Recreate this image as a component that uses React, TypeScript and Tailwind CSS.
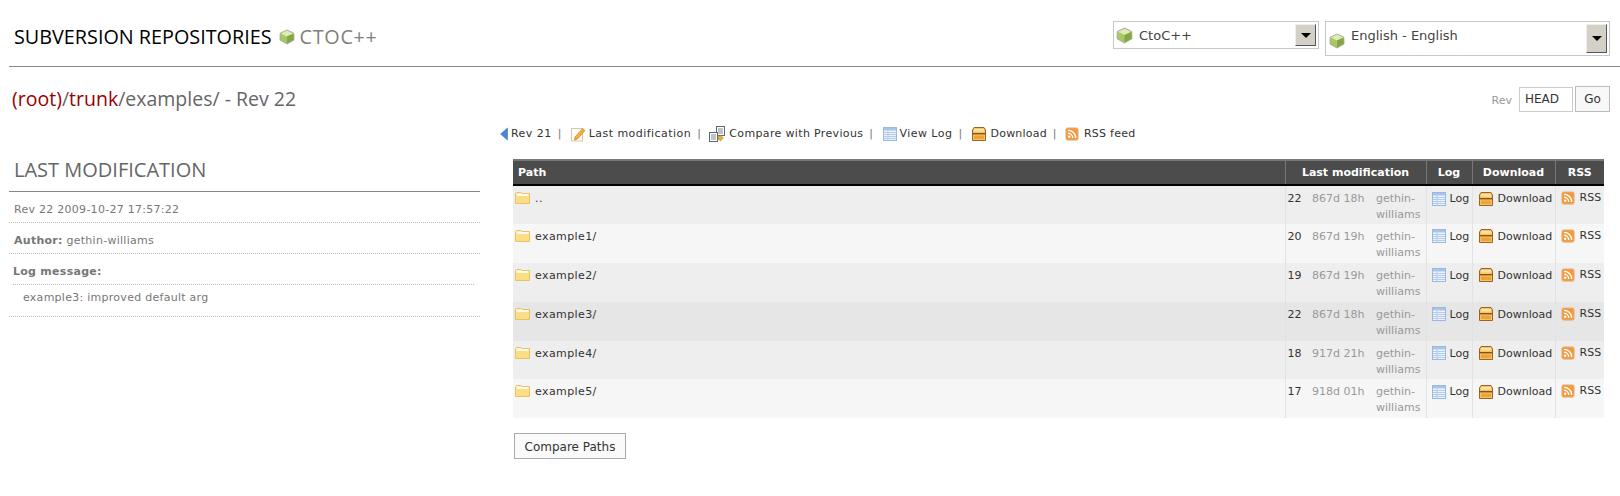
import type { ReactNode } from "react";

function Cube({ className = "" }: { className?: string }) {
  return (
    <svg viewBox="0 0 16 16" className={`shrink-0 ${className}`}>
      <path d="M8 1 14.8 4.2 15 11 8 15 1 11 1.2 4.2Z" fill="#a8c864" stroke="#a3a89a" strokeWidth="0.9" strokeLinejoin="round" />
      <path d="M8 1.6 14.2 4.5 8 7.6 1.8 4.5Z" fill="#dcebb8" />
      <path d="M8 7.6 14.5 4.7 14.6 10.8 8 14.5Z" fill="#86a544" />
    </svg>
  );
}

function FolderIcon() {
  return (
    <svg viewBox="0 0 16 14" className="h-[14px] w-4 shrink-0">
      <path d="M.5 2.5 1.5 1.5H6L7 2.5H14.5V12.5H.5Z" fill="#fbeebc" stroke="#e6c266" />
      <rect x="1.2" y="5" width="12.8" height="7" fill="#fbdd84" />
      <rect x="2.5" y="3.2" width="10.5" height="1.4" fill="#fff" />
    </svg>
  );
}

function LogIcon() {
  return (
    <svg viewBox="0 0 16 16" className="h-4 w-4 shrink-0">
      <rect x="1.5" y="1.5" width="13" height="13" fill="#eef4fc" stroke="#9ab8e0" />
      <rect x="2" y="2" width="12" height="2.5" fill="#a9c4ea" />
      <path d="M2 6.5H14M2 8.5H14M2 10.5H14M2 12.5H14M6 4.5V14" stroke="#b4cbec" strokeWidth="1" />
    </svg>
  );
}

function DownloadIcon() {
  return (
    <svg viewBox="0 0 16 16" className="h-4 w-4 shrink-0">
      <path d="M3 1.5H13L14.5 4V14.5H1.5V4Z" fill="#f6c468" stroke="#a0621c" strokeLinejoin="round" />
      <rect x="3" y="3" width="10" height="2.5" fill="#fbe2a6" />
      <rect x="1.5" y="7" width="13" height="1.4" fill="#8a5214" />
      <rect x="3" y="9.5" width="10" height="3.5" fill="#eda437" />
    </svg>
  );
}

function RssIcon() {
  return (
    <svg viewBox="0 0 16 16" className="h-[14px] w-[14px] shrink-0">
      <rect x="1" y="1" width="14" height="14" rx="2" fill="#f29a3c" stroke="#e6b488" />
      <circle cx="4.8" cy="11.2" r="1.4" fill="#fff" />
      <path d="M3.5 7.2a5.3 5.3 0 0 1 5.3 5.3M3.5 3.8a8.7 8.7 0 0 1 8.7 8.7" fill="none" stroke="#fff" strokeWidth="1.6" />
    </svg>
  );
}

function EditIcon() {
  return (
    <svg viewBox="0 0 16 16" className="h-4 w-4 shrink-0">
      <rect x="1.5" y="2.5" width="11" height="12.5" fill="#fdfdf8" stroke="#d4c8b0" />
      <path d="M5 11 12.5 2.5 15 4.5 7.5 13 4.5 14Z" fill="#f2b13a" stroke="#c4842a" strokeWidth="0.7" />
    </svg>
  );
}

function CompareIcon() {
  return (
    <svg viewBox="0 0 16 16" className="h-4 w-4 shrink-0">
      <rect x="7.5" y="0.5" width="8" height="9" fill="#fff" stroke="#5c6a78" />
      <path d="M9 3H14M9 5H14M9 7H14" stroke="#5c6a78" strokeWidth="0.8" />
      <rect x="0.5" y="6.5" width="8" height="9" fill="#fff" stroke="#5c6a78" />
      <path d="M2 9H7M2 11H7M2 13H7" stroke="#5c6a78" strokeWidth="0.8" />
      <path d="M9 10.5 11 10.5 11 9 14.5 12 11 15 11 13.5 9 13.5Z" fill="#e8b030" stroke="#a87c18" strokeWidth="0.5" />
    </svg>
  );
}

function ArrowIcon() {
  return (
    <svg viewBox="0 0 8 14" className="h-[14px] w-2 shrink-0">
      <path d="M7.5 1V13L.5 7Z" fill="#4a86d8" stroke="#2f62b0" strokeWidth="0.5" />
    </svg>
  );
}

function FakeSelect({ label, className, boxClass, arrowClass, iconClass }: { label: string; className: string; boxClass: string; arrowClass: string; iconClass: string }) {
  return (
    <div className={`flex border border-[#c8c8c8] bg-white ${className}`}>
      <div className={`flex flex-1 items-start ${boxClass}`}>
        <Cube className={iconClass} />
        <span className="ml-[6px] mt-px text-[13px] leading-[16px] text-[#444]">{label}</span>
      </div>
      <div className={`flex items-center justify-center border border-b-[#555] border-l-[#eee] border-r-[#555] border-t-[#eee] bg-[#d4d0c8] ${arrowClass}`}>
        <div className="h-0 w-0 border-x-[5px] border-t-[5px] border-x-transparent border-t-black" />
      </div>
    </div>
  );
}

function NavItem({ icon, children, sep = true }: { icon: ReactNode; children: ReactNode; sep?: boolean }) {
  return (
    <span className="flex items-center">
      {icon}
      <span>{children}</span>
      {sep && <span className="ml-[6px] mr-[8px] text-[#777]">|</span>}
    </span>
  );
}

const rows = [
  { name: "..", rev: 22, age: "867d 18h", bg: "bg-[#eeeeee]" },
  { name: "example1/", rev: 20, age: "867d 19h", bg: "bg-[#f6f6f6]" },
  { name: "example2/", rev: 19, age: "867d 19h", bg: "bg-[#eeeeee]" },
  { name: "example3/", rev: 22, age: "867d 18h", bg: "bg-[#e6e6e6]" },
  { name: "example4/", rev: 18, age: "917d 21h", bg: "bg-[#eeeeee]" },
  { name: "example5/", rev: 17, age: "918d 01h", bg: "bg-[#f6f6f6]" },
];

export default function App() {
  return (
    <div className="h-[496px] bg-white text-[12px] text-[#333] [font-family:'DejaVu_Sans',sans-serif]">
      {/* header */}
      <div className="ml-[9px] flex h-[67px] border-b border-[#888] pr-[10px]">
        <div className="flex flex-1 items-start pl-[5px] pt-[25px] text-[19.8px] leading-[24px] [font-family:'Open_Sans',sans-serif]">
          <span className="text-black">SUBVERSION REPOSITORIES</span>
          <Cube className="ml-[7px] mt-[4px] h-4 w-4" />
          <span className="ml-[5px] tracking-[0.7px] text-[#808080]">CTOC++</span>
        </div>
        <div className="flex items-start gap-[6px] pt-[21px]">
          <FakeSelect label="CtoC++" className="h-[28px] w-[206px]" boxClass="pl-[2px] pt-[5px]" arrowClass="mr-[2px] mt-[2px] h-[22px] w-[21px]" iconClass="h-[17px] w-[17px]" />
          <FakeSelect label="English - English" className="h-[35px] w-[285px]" boxClass="pl-[3px] pt-[5px]" arrowClass="mr-[2px] mt-[2px] h-[29px] w-[21px]" iconClass="mt-[6px] h-4 w-4" />
        </div>
      </div>

      <div className="flex">
        {/* left column */}
        <div className="ml-[9px] w-[471px] shrink-0">
          <div className="pl-[3px] pt-[19px] text-[19.5px] leading-[26px] text-[#666] [font-family:'Open_Sans',sans-serif]">
            <span className="text-[#990000]">(root)</span>/<span className="text-[#990000]">trunk</span>/examples/ - Rev 22
          </div>
          <div className="mt-[44px] h-[36px] border-b border-[#888] pl-[5px] text-[20px] leading-[28px] text-[#666] [font-family:'Open_Sans',sans-serif]">
            LAST MODIFICATION
          </div>
          <div className="text-[11px] leading-[16px] tracking-[0.27px] text-[#777]">
            <div className="border-b border-dotted border-[#bbb] pb-[4px] pl-[5px] pt-[10px]">Rev 22 2009-10-27 17:57:22</div>
            <div className="border-b border-dotted border-[#bbb] pb-[4px] pl-[5px] pt-[10px]"><b>Author:</b> gethin-williams</div>
            <div className="pl-[4px] pt-[10px]"><b>Log message:</b></div>
            <div className="ml-[4px] mr-[6px] mt-[4px] border-t border-dotted border-[#bbb] pl-[10px] pt-[5px]">example3: improved default arg</div>
            <div className="mt-[10px] border-b border-dotted border-[#bbb]" />
          </div>
        </div>

        {/* right column */}
        <div className="ml-[33px] flex-1 pr-[10px]">
          <div className="flex h-[46px] items-start justify-end pt-[20px]">
            <span className="mr-[7px] mt-[6px] text-[11px] text-[#999]">Rev</span>
            <div className="h-[25px] w-[54px] border border-[#ccc] pl-[5px] text-[12px] leading-[23px]">HEAD</div>
            <div className="ml-[2px] mt-[-1px] h-[26px] w-[35px] border border-[#bbb] bg-[#f8f8f8] text-center text-[12px] leading-[24px]">Go</div>
          </div>
          <div className="-ml-[13px] flex h-[46px] items-start pt-[13px] text-[11px] leading-[16px] tracking-[0.45px] text-[#333]">
            <NavItem icon={<ArrowIcon />}><span className="ml-[3px]">Rev 21</span></NavItem>
            <NavItem icon={<EditIcon />}><span className="ml-[3px]">Last modification</span></NavItem>
            <NavItem icon={<CompareIcon />}><span className="ml-[4px] tracking-[0.35px]">Compare with Previous</span></NavItem>
            <NavItem icon={<LogIcon />}><span className="ml-[2px]">View Log</span></NavItem>
            <NavItem icon={<DownloadIcon />}><span className="ml-[4px] tracking-[0.2px]">Download</span></NavItem>
            <NavItem sep={false} icon={<RssIcon />}><span className="ml-[5px] tracking-[0.25px]">RSS feed</span></NavItem>
          </div>

          <table className="w-[1091px] table-fixed border-collapse text-[11px] leading-[16px]">
            <colgroup>
              <col className="w-[772px]" />
              <col className="w-[22px]" />
              <col className="w-[67px]" />
              <col className="w-[52px]" />
              <col className="w-[46px]" />
              <col className="w-[83px]" />
              <col className="w-[49px]" />
            </colgroup>
            <thead>
              <tr className="h-[25px] border-b-[2px] border-t-[2px] border-b-black border-t-[#777] bg-[#4c4c4c] font-bold text-white">
                <th className="pl-[5px] text-left">Path</th>
                <th colSpan={3} className="border-l border-[#777] text-center">Last modification</th>
                <th className="border-l border-[#777] text-center">Log</th>
                <th className="border-l border-[#777] text-center">Download</th>
                <th className="border-l border-[#777] text-center">RSS</th>
              </tr>
            </thead>
            <tbody>
              {rows.map((r) => (
                <tr key={r.name} className={`h-[38.9px] align-top ${r.bg}`}>
                  <td className="pl-[2px] pt-[5px]">
                    <span className="flex items-start">
                      <FolderIcon />
                      <span className="ml-[4px] mt-px leading-[14px] tracking-[0.4px] text-[#333]">{r.name}</span>
                    </span>
                  </td>
                  <td className="border-l border-[#e2e2e2] pl-[2px] pt-[5px] text-[#333]">{r.rev}</td>
                  <td className="pl-[5px] pt-[5px] text-[#999]">{r.age}</td>
                  <td className="pl-[2px] pt-[5px] text-[#999]">gethin-<br />williams</td>
                  <td className="border-l border-[#e2e2e2] pl-[4px] pt-[4px]">
                    <span className="flex items-center"><LogIcon /><span className="ml-[3px] mt-[1px]">Log</span></span>
                  </td>
                  <td className="border-l border-[#e2e2e2] pl-[5px] pt-[4px]">
                    <span className="flex items-center"><DownloadIcon /><span className="ml-[4px] mt-[1px]">Download</span></span>
                  </td>
                  <td className="border-l border-[#e2e2e2] pl-[5px] pt-[4px]">
                    <span className="flex items-center"><RssIcon /><span className="ml-[5px]">RSS</span></span>
                  </td>
                </tr>
              ))}
            </tbody>
          </table>

          <button className="ml-px mt-[15px] h-[26px] w-[112px] border border-[#aaa] bg-[#fafafa] pt-px text-[12px] text-[#333]">Compare Paths</button>
        </div>
      </div>
    </div>
  );
}
